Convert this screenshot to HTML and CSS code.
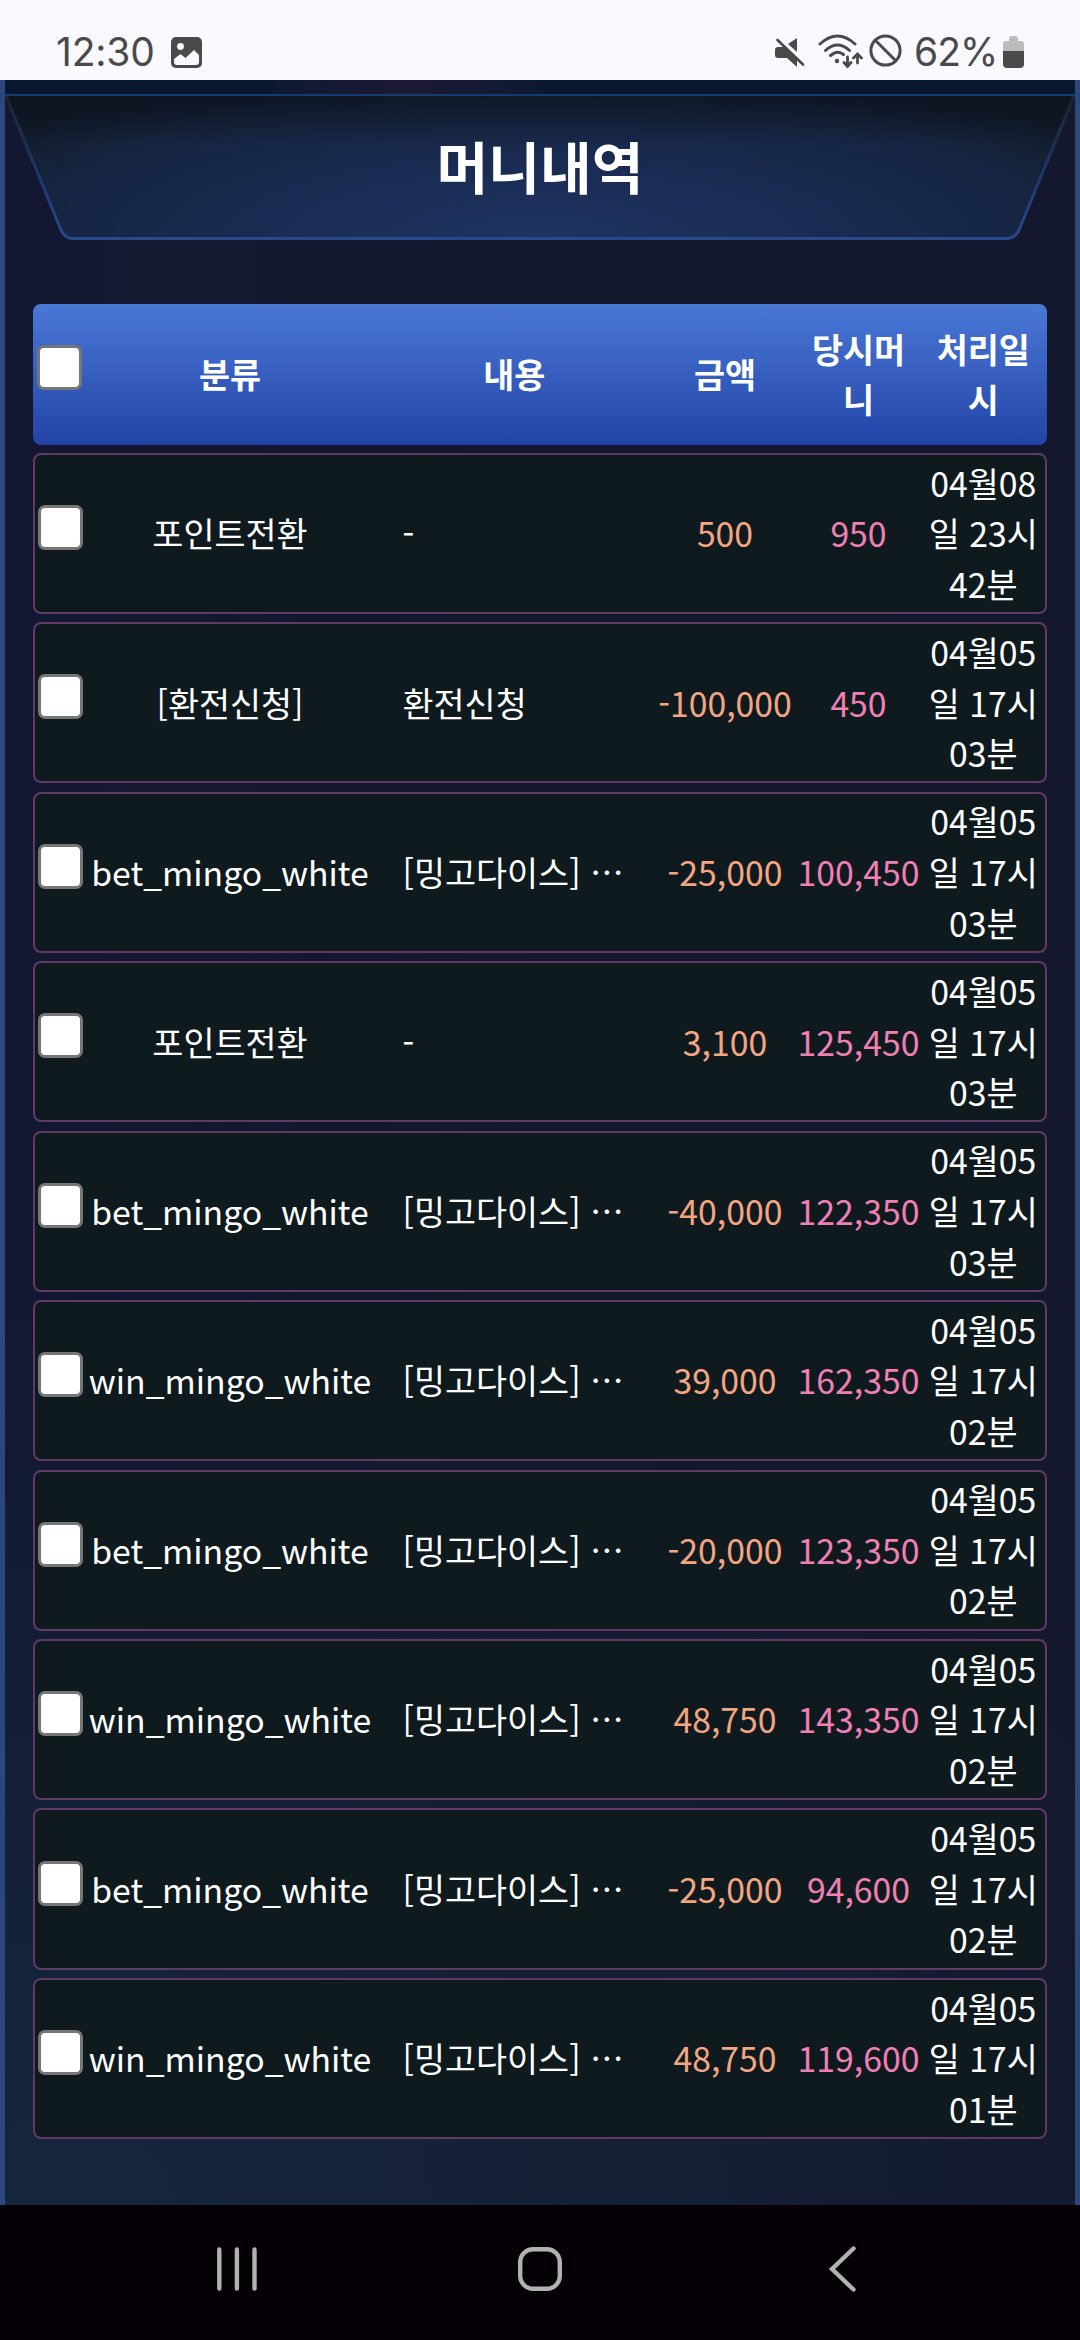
FILE: index.html
```html
<!DOCTYPE html>
<html lang="ko">
<head>
  <meta charset="UTF-8">
  <meta name="viewport" content="width=device-width, initial-scale=1.0">
  <title>머니내역</title>
  <link rel="stylesheet" href="styles.css">
</head>
<body>
  <div class="statusbar">
    <span class="time">12:30</span>
    <svg class="ico-photo" width="31" height="31" viewBox="0 0 31 31">
      <rect width="31" height="31" rx="5" fill="#4a4a4a"/>
      <circle cx="9.5" cy="9.5" r="3.4" fill="#faf9ff"/>
      <path d="M3 22l6.500-5 5 4L23 13l5 5v7q0 3-3 3H6q-3 0-3-3z" fill="#faf9ff"/>
    </svg>
    <div class="status-right">
      <svg class="ico-mute" width="30" height="30" viewBox="0 0 30 30">
        <path d="M3 10h6L22 22v8L12 21H3q-3 0-3-3v-5q0-3 3-3z" fill="#4a4a4a"/>
        <path d="M22 1v14L13 7z" fill="#4a4a4a"/>
        <path d="M2.500 3L28 27.500" stroke="#4a4a4a" stroke-width="2.600" stroke-linecap="round"/>
      </svg>
      <svg class="ico-wifi" width="46" height="34" viewBox="0 0 46 34" fill="none" stroke="#4a4a4a" stroke-width="3" stroke-linecap="round">
        <path d="M2 10Q19.500-6 37 10M7.500 16.500Q19.500 5.500 31.500 16.500M12.500 21.500Q19.500 15.500 25.500 20.500"/>
        <circle cx="19" cy="27" r="2.200" fill="#4a4a4a" stroke="none"/>
        <path d="M29.500 23v8.500M26 28.500l3.500 4 3.500-4M39.500 29v-8.500M35.500 24l4-4 4 4" stroke-width="2.800"/>
      </svg>
      <svg class="ico-block" width="33" height="33" viewBox="0 0 33 33" fill="none" stroke="#4a4a4a" stroke-width="3">
        <circle cx="16.500" cy="16.500" r="14.600"/>
        <path d="M6 6l21 21"/>
      </svg>
      <span class="percent">62%</span>
      <svg class="ico-battery" width="21" height="32" viewBox="0 0 21 32">
        <path d="M0 15V8q0-3 3-3h3V3q0-3 3-3h3q3 0 3 3v2h3q3 0 3 3v7z" fill="#bbbabd"/>
        <path d="M0 15h21v13q0 4-4 4H4q-4 0-4-4z" fill="#4a4a4a"/>
      </svg>
    </div>
  </div>

  <div class="page">
    <div class="tabs">
      <div class="tab"></div>
      <div class="tab on"></div>
      <div class="tab"></div>
      <div class="tab"></div>
    </div>

    <div class="title-box">
      <svg class="title-bg" width="1070" height="144" viewBox="0 0 1070 144">
        <defs>
          <radialGradient id="panel" gradientUnits="userSpaceOnUse" cx="535" cy="144" r="144" gradientTransform="translate(535 0) scale(4.6 1.25) translate(-535 -28.8)">
            <stop offset="0" stop-color="#1f3463"/>
            <stop offset=".45" stop-color="#192b51"/>
            <stop offset=".8" stop-color="#15243f"/>
            <stop offset="1" stop-color="#111b2b"/>
          </radialGradient>
          <linearGradient id="shade" x1="0" y1="0" x2="0" y2="1">
            <stop offset="0" stop-color="#0b0d14" stop-opacity=".55"/>
            <stop offset=".35" stop-color="#0b0d14" stop-opacity="0"/>
          </linearGradient>
          <linearGradient id="edge" x1="0" y1="0" x2="0" y2="1">
            <stop offset="0" stop-color="#1c2430"/>
            <stop offset=".6" stop-color="#20396e"/>
            <stop offset="1" stop-color="#284a8c"/>
          </linearGradient>
        </defs>
        <path d="M1 0L56 134Q60 142.500 68 142.500H1002Q1010 142.500 1014 134L1069 0z" fill="url(#panel)"/>
        <path d="M1 0L56 134Q60 142.500 68 142.500H1002Q1010 142.500 1014 134L1069 0z" fill="url(#shade)"/>
        <path d="M1 0L56 134Q60 142.500 68 142.500H1002Q1010 142.500 1014 134L1069 0" fill="none" stroke="url(#edge)" stroke-width="3"/>
      </svg>
      <h1>머니내역</h1>
    </div>

    <div class="list">
      <div class="row head">
        <div class="chk"><input type="checkbox"></div>
        <div class="type">분류</div>
        <div class="memo">내용</div>
        <div class="amount">금액</div>
        <div class="money">당시머니</div>
        <div class="date">처리일시</div>
      </div>
      <div class="row">
        <div class="chk"><input type="checkbox"></div>
        <div class="type">포인트전환</div>
        <div class="memo">-</div>
        <div class="amount">500</div>
        <div class="money">950</div>
        <div class="date">04월08일 23시 42분</div>
      </div>
      <div class="row">
        <div class="chk"><input type="checkbox"></div>
        <div class="type">[환전신청]</div>
        <div class="memo">환전신청</div>
        <div class="amount">-100,000</div>
        <div class="money">450</div>
        <div class="date">04월05일 17시 03분</div>
      </div>
      <div class="row">
        <div class="chk"><input type="checkbox"></div>
        <div class="type">bet_mingo_white</div>
        <div class="memo">[밍고다이스] …</div>
        <div class="amount">-25,000</div>
        <div class="money">100,450</div>
        <div class="date">04월05일 17시 03분</div>
      </div>
      <div class="row">
        <div class="chk"><input type="checkbox"></div>
        <div class="type">포인트전환</div>
        <div class="memo">-</div>
        <div class="amount">3,100</div>
        <div class="money">125,450</div>
        <div class="date">04월05일 17시 03분</div>
      </div>
      <div class="row">
        <div class="chk"><input type="checkbox"></div>
        <div class="type">bet_mingo_white</div>
        <div class="memo">[밍고다이스] …</div>
        <div class="amount">-40,000</div>
        <div class="money">122,350</div>
        <div class="date">04월05일 17시 03분</div>
      </div>
      <div class="row">
        <div class="chk"><input type="checkbox"></div>
        <div class="type">win_mingo_white</div>
        <div class="memo">[밍고다이스] …</div>
        <div class="amount">39,000</div>
        <div class="money">162,350</div>
        <div class="date">04월05일 17시 02분</div>
      </div>
      <div class="row">
        <div class="chk"><input type="checkbox"></div>
        <div class="type">bet_mingo_white</div>
        <div class="memo">[밍고다이스] …</div>
        <div class="amount">-20,000</div>
        <div class="money">123,350</div>
        <div class="date">04월05일 17시 02분</div>
      </div>
      <div class="row">
        <div class="chk"><input type="checkbox"></div>
        <div class="type">win_mingo_white</div>
        <div class="memo">[밍고다이스] …</div>
        <div class="amount">48,750</div>
        <div class="money">143,350</div>
        <div class="date">04월05일 17시 02분</div>
      </div>
      <div class="row">
        <div class="chk"><input type="checkbox"></div>
        <div class="type">bet_mingo_white</div>
        <div class="memo">[밍고다이스] …</div>
        <div class="amount">-25,000</div>
        <div class="money">94,600</div>
        <div class="date">04월05일 17시 02분</div>
      </div>
      <div class="row">
        <div class="chk"><input type="checkbox"></div>
        <div class="type">win_mingo_white</div>
        <div class="memo">[밍고다이스] …</div>
        <div class="amount">48,750</div>
        <div class="money">119,600</div>
        <div class="date">04월05일 17시 01분</div>
      </div>
    </div>
  </div>

  <div class="navbar">
    <svg width="48" height="48" viewBox="0 0 48 48" fill="none" stroke="#b2b2b2" stroke-width="4.400" stroke-linecap="round">
      <path d="M6.300 4.500v39M23.900 4.500v39M41.500 4.500v39"/>
    </svg>
    <svg width="48" height="48" viewBox="0 0 48 48" fill="none" stroke="#b2b2b2" stroke-width="4.400">
      <rect x="4.200" y="4.200" width="39.600" height="39.600" rx="13"/>
    </svg>
    <svg width="48" height="48" viewBox="0 0 48 48" fill="none" stroke="#b2b2b2" stroke-width="4.400" stroke-linecap="round">
      <path d="M34.500 3.500L13 24l21.500 20.500"/>
    </svg>
  </div>
</body>
</html>
```
FILE: styles.css
```css
* {
  box-sizing: border-box;
}
body {
  margin: 0;
  width: 1080px;
  height: 2340px;
  overflow: hidden;
  display: flex;
  flex-direction: column;
  background: #050005;
  color: #fff;
  font-family: "Noto Sans CJK KR", "Noto Sans", sans-serif;
  font-size: 33.75px;
  line-height: 50.6px;
}
svg {
  display: block;
  flex: none;
}

/* 상태바 */
.statusbar {
  height: 80px;
  flex: none;
  display: flex;
  align-items: flex-start;
  padding-left: 56px;
  background: #faf9ff;
  color: #4a4a4a;
  font-family: Inter, Roboto, sans-serif;
  font-size: 39px;
  line-height: 48px;
}
.time,
.percent {
  margin-top: 28px;
}
.time {
  width: 115px;
  letter-spacing: -0.2px;
}
.ico-photo {
  margin-top: 37px;
}
.status-right {
  margin-left: auto;
  padding-right: 56px;
  display: flex;
}
.ico-mute {
  margin-top: 37px;
}
.ico-wifi {
  margin: 34px 5px 0 13px;
}
.ico-block {
  margin-top: 34px;
}
.percent {
  width: 85px;
  margin-left: 12px;
  letter-spacing: -1px;
}
.ico-battery {
  margin: 36px 0 0 4px;
}

/* 본문 */
.page {
  height: 2125px;
  flex: none;
  border: 5px solid #2b477d;
  border-width: 0 5px;
  background:
    radial-gradient(ellipse 1200px 900px at 5% 100%, #15263e 0%, rgba(21, 38, 62, 0) 100%),
    linear-gradient(90deg, #131732 0%, #14182c 50%, #14182e 100%);
}
.tabs {
  height: 16px;
  display: flex;
  border-bottom: 2px solid #123d73;
}
.tab {
  flex: 1;
  background: #081831;
}
.tab.on {
  background: radial-gradient(circle 135px at 50% 50%, #1d1934, #0c1832);
}
.title-box {
  position: relative;
  height: 144px;
  display: flex;
  align-items: center;
  justify-content: center;
}
.title-bg {
  position: absolute;
  left: 0;
  top: 0;
}
.title-box h1 {
  position: relative;
  margin: 0 0 7px;
  font-size: 56.25px;
  line-height: 84px;
  font-weight: 700;
}

/* 내역 리스트 */
.list {
  margin: 64px 28px 0;
  display: flex;
  flex-direction: column;
  gap: 8.4px;
}
.row {
  height: 161.05px;
  display: grid;
  grid-template-columns: 51px 288px 280.5px 141px 126px 1fr;
  align-items: center;
  text-align: center;
  white-space: nowrap;
  border: 2px solid #5f3a65;
  border-radius: 8px;
  background: #0f1a1e;
}
.row.head {
  height: 140.6px;
  padding: 0 2px;
  border: 0;
  font-weight: 700;
  background: linear-gradient(#4a78d6, #2244a6);
}
.chk {
  padding: 0 0 12px 3px;
}
.row.head .chk {
  padding-left: 2px;
  padding-bottom: 13px;
}
.chk input {
  appearance: none;
  display: block;
  width: 45px;
  height: 45px;
  margin: 0;
  border: 3px solid #767676;
  border-radius: 7px;
  background: #fff;
}
.memo {
  padding: 0 20px 0 28.500px;
  text-align: left;
  overflow: hidden;
}
.row.head .memo {
  padding: 0;
  text-align: center;
}
.amount {
  color: #f4a582;
}
.money {
  color: #f080b4;
}
.head .amount,
.head .money {
  color: #fff;
}
.date,
.head .money {
  padding: 0 6px;
  white-space: normal;
  word-break: break-all;
}

/* 하단 네비게이션 */
.navbar {
  height: 135px;
  flex: none;
  display: flex;
  justify-content: space-between;
  padding: 40px 213px 0;
  background: #050005;
}
```
